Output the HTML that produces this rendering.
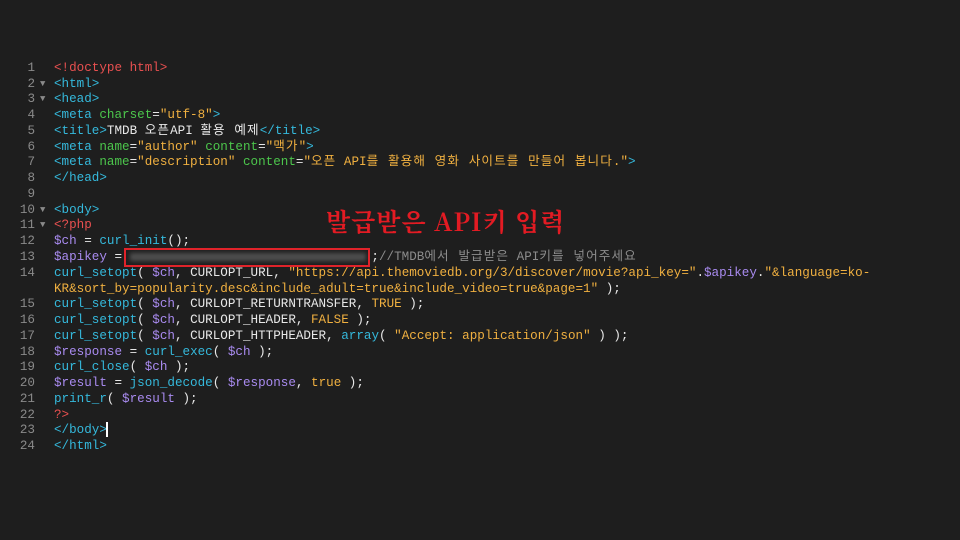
<!DOCTYPE html><html><head><meta charset="utf-8"><style>
body{margin:0;width:960px;height:540px;background:#1e1e1e;overflow:hidden;font-family:"Liberation Mono","Noto Sans CJK KR",monospace;font-size:12.6px;}
.l{position:absolute;left:0;height:16px;line-height:16px;white-space:pre;color:#e8e8e8}
.n{position:absolute;left:0;width:35px;text-align:right;color:#8a8a8a}
.f{position:absolute;left:40px;color:#8a8a8a;font-size:9px}
.c{position:absolute;left:54px}
.k{letter-spacing:1.1px}
.t{color:#35b9dc}.a{color:#4cc64c}.s{color:#f0b040}.v{color:#a98bf0}.r{color:#e85050}.w{color:#eee}.g{color:#8c8c8c}
.title{position:absolute;left:326px;top:203px;color:#e31b23;font-family:"Noto Serif CJK SC","Liberation Serif",serif;font-weight:bold;font-size:25px;letter-spacing:1px}
.box{position:absolute;left:124px;top:248px;width:246px;height:19px;border:2px solid #e0232a;box-sizing:border-box}
.blur{position:absolute;left:130px;top:253px;width:236px;height:8px;background:#5a5a5a;filter:blur(2px);opacity:.8}
.cur{position:absolute;left:106px;top:422px;width:2px;height:15px;background:#fff}
</style></head><body>
<div class="l" style="top:60px"><span class="n">1</span><span class="c"><span class="r">&lt;!doctype html&gt;</span></span></div>
<div class="l" style="top:76px"><span class="n">2</span><span class="f">▼</span><span class="c t">&lt;html&gt;</span></div>
<div class="l" style="top:91px"><span class="n">3</span><span class="f">▼</span><span class="c t">&lt;head&gt;</span></div>
<div class="l" style="top:107px"><span class="n">4</span><span class="c"><span class="t">&lt;meta</span> <span class="a">charset</span>=<span class="s">"utf-8"</span><span class="t">&gt;</span></span></div>
<div class="l" style="top:123px"><span class="n">5</span><span class="c"><span class="t">&lt;title&gt;</span>TMDB <span class="k">오픈</span>API <span class="k">활용 예제</span><span class="t">&lt;/title&gt;</span></span></div>
<div class="l" style="top:139px"><span class="n">6</span><span class="c"><span class="t">&lt;meta</span> <span class="a">name</span>=<span class="s">"author"</span> <span class="a">content</span>=<span class="s">"<span class="k">맥가</span>"</span><span class="t">&gt;</span></span></div>
<div class="l" style="top:154px"><span class="n">7</span><span class="c"><span class="t">&lt;meta</span> <span class="a">name</span>=<span class="s">"description"</span> <span class="a">content</span>=<span class="s">"<span class="k">오픈</span> API<span class="k">를 활용해 영화 사이트를 만들어 봅니다</span>."</span><span class="t">&gt;</span></span></div>
<div class="l" style="top:170px"><span class="n">8</span><span class="c t">&lt;/head&gt;</span></div>
<div class="l" style="top:186px"><span class="n">9</span></div>
<div class="l" style="top:202px"><span class="n">10</span><span class="f">▼</span><span class="c t">&lt;body&gt;</span></div>
<div class="l" style="top:217px"><span class="n">11</span><span class="f">▼</span><span class="c r">&lt;?php</span></div>
<div class="l" style="top:233px"><span class="n">12</span><span class="c"><span class="v">$ch</span> = <span class="t">curl_init</span>();</span></div>
<div class="l" style="top:249px"><span class="n">13</span><span class="c"><span class="v">$apikey</span> =                                 ;<span class="g">//TMDB<span class="k">에서 발급받은</span> API<span class="k">키를 넣어주세요</span></span></span></div>
<div class="l" style="top:265px"><span class="n">14</span><span class="c"><span class="t">curl_setopt</span>( <span class="v">$ch</span>, CURLOPT_URL, <span class="s">"https://api.themoviedb.org/3/discover/movie?api_key="</span>.<span class="v">$apikey</span>.<span class="s">"&amp;language=ko-</span></span></div>
<div class="l" style="top:281px"><span class="c"><span class="s">KR&amp;sort_by=popularity.desc&amp;include_adult=true&amp;include_video=true&amp;page=1"</span> );</span></div>
<div class="l" style="top:296px"><span class="n">15</span><span class="c"><span class="t">curl_setopt</span>( <span class="v">$ch</span>, CURLOPT_RETURNTRANSFER, <span class="s">TRUE</span> );</span></div>
<div class="l" style="top:312px"><span class="n">16</span><span class="c"><span class="t">curl_setopt</span>( <span class="v">$ch</span>, CURLOPT_HEADER, <span class="s">FALSE</span> );</span></div>
<div class="l" style="top:328px"><span class="n">17</span><span class="c"><span class="t">curl_setopt</span>( <span class="v">$ch</span>, CURLOPT_HTTPHEADER, <span class="t">array</span>( <span class="s">"Accept: application/json"</span> ) );</span></div>
<div class="l" style="top:344px"><span class="n">18</span><span class="c"><span class="v">$response</span> = <span class="t">curl_exec</span>( <span class="v">$ch</span> );</span></div>
<div class="l" style="top:359px"><span class="n">19</span><span class="c"><span class="t">curl_close</span>( <span class="v">$ch</span> );</span></div>
<div class="l" style="top:375px"><span class="n">20</span><span class="c"><span class="v">$result</span> = <span class="t">json_decode</span>( <span class="v">$response</span>, <span class="s">true</span> );</span></div>
<div class="l" style="top:391px"><span class="n">21</span><span class="c"><span class="t">print_r</span>( <span class="v">$result</span> );</span></div>
<div class="l" style="top:407px"><span class="n">22</span><span class="c r">?&gt;</span></div>
<div class="l" style="top:422px"><span class="n">23</span><span class="c t">&lt;/body&gt;</span></div>
<div class="l" style="top:438px"><span class="n">24</span><span class="c t">&lt;/html&gt;</span></div>
<div class="blur"></div><div class="box"></div><div class="cur"></div>
<div class="title">발급받은 API키 입력</div>
</body></html>
